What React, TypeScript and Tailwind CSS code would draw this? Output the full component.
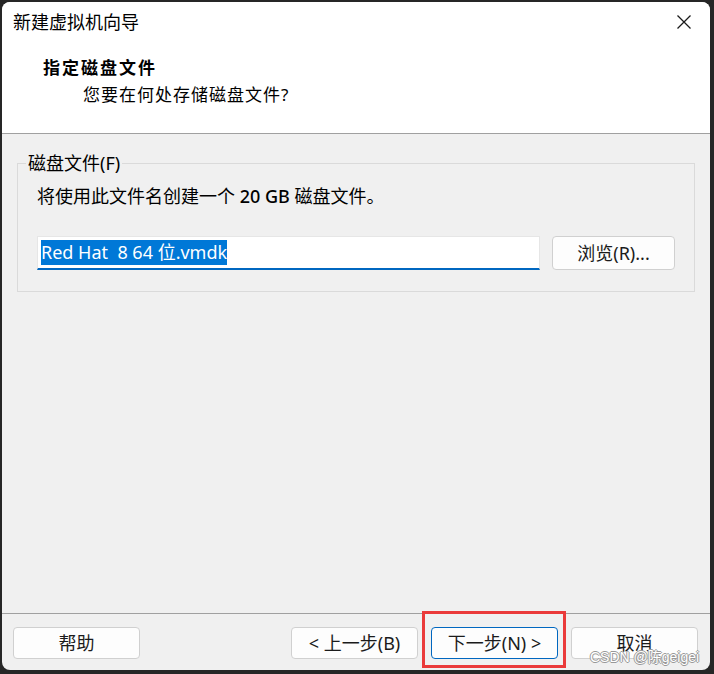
import React from 'react';

const cjk = { fontFamily: '"Segoe UI", "Noto Sans", "Noto Sans CJK SC", sans-serif' };

const WizardButton = ({ label, primary = false }: { label: string; primary?: boolean }) => (
  <button
    className={`h-[32px] w-[127px] rounded-[4px] bg-[#fdfdfd] text-[18px] text-[#1b1b1b] border ${
      primary ? 'border-[#0067c0]' : 'border-[#d0d0d0]'
    }`}
  >
    {label}
  </button>
);

const App = () => {
  return (
    <div className="h-[674px] w-[714px] bg-[#262626] pl-[2px] pt-[2px] pr-[4px] pb-[4px]" style={cjk}>
      <div className="relative flex h-full flex-col overflow-hidden rounded-[8px] bg-[#f0f0f0]">
        {/* 标题栏 + 页眉 */}
        <div className="bg-white">
          <div className="flex h-[40px] items-center justify-between pl-[11px] pr-[18px]">
            <span className="text-[18px] text-[#000]">新建虚拟机向导</span>
            <svg width="16" height="16" viewBox="0 0 16 16" className="text-[#1a1a1a]">
              <path d="M1.5 1.5 L14.5 14.5 M14.5 1.5 L1.5 14.5" stroke="currentColor" strokeWidth="1.3" />
            </svg>
          </div>
          <div className="pb-[26px] pt-[14px]">
            <div className="pl-[41px] text-[17px] font-bold leading-[24px] tracking-[2px] text-[#000]">指定磁盘文件</div>
            <div className="mt-[3px] pl-[81px] text-[17px] leading-[24px] tracking-[1px] text-[#000]">
              您要在何处存储磁盘文件?
            </div>
          </div>
        </div>
        <div className="h-px bg-[#a0a0a0]" />

        {/* 内容区 */}
        <div className="flex-1 px-[15px] pt-[17px]">
          <fieldset className="border border-[#dadada] px-0 pb-[21px]">
            <legend className="ml-[8px] px-[2px] text-[18px] leading-[24px] text-[#000]">磁盘文件(F)</legend>
            <div className="px-[19px]">
              <div className="mt-[9px] text-[18px] leading-[24px] text-[#000]">
                将使用此文件名创建一个 <span className="font-medium">20 GB</span> 磁盘文件。
              </div>
              <div className="mt-[28px] flex items-center gap-[12px]">
                <div className="flex h-[34px] flex-1 items-center border border-b-2 border-[#e6e6e6] border-b-[#0067c0] bg-white pl-[3px]">
                  <span className="bg-[#0078d7] text-[18px] leading-[25px] text-white">Red Hat&nbsp;&nbsp;8 64 位.vmdk</span>
                </div>
                <button className="h-[34px] w-[123px] rounded-[4px] border border-[#d0d0d0] bg-[#fdfdfd] text-[18px] text-[#1b1b1b]">
                  浏览(R)...
                </button>
              </div>
            </div>
          </fieldset>
        </div>

        <div className="h-px bg-[#a0a0a0]" />
        {/* 底部按钮 */}
        <div className="flex h-[56px] items-start justify-between pl-[11px] pr-[12px] pt-[13px]">
          <WizardButton label="帮助" />
          <div className="flex gap-[13px]">
            <WizardButton label="< 上一步(B)" />
            <WizardButton label="下一步(N) >" primary />
            <WizardButton label="取消" />
          </div>
        </div>

        {/* 标注框 */}
        <div className="pointer-events-none absolute left-[420px] top-[609px] h-[57px] w-[144px] border-[3px] border-[#ea3a3a]" />
        <div className="pointer-events-none absolute left-[588px] top-[645px] whitespace-nowrap font-['Liberation_Sans','Noto_Sans_CJK_SC',sans-serif] text-[14px] text-white [text-shadow:1px_0_0_#999,-1px_0_0_#999,0_1px_0_#999,0_-1px_0_#999]">
          CSDN @陈geigei
        </div>
      </div>
    </div>
  );
};

export default App;
